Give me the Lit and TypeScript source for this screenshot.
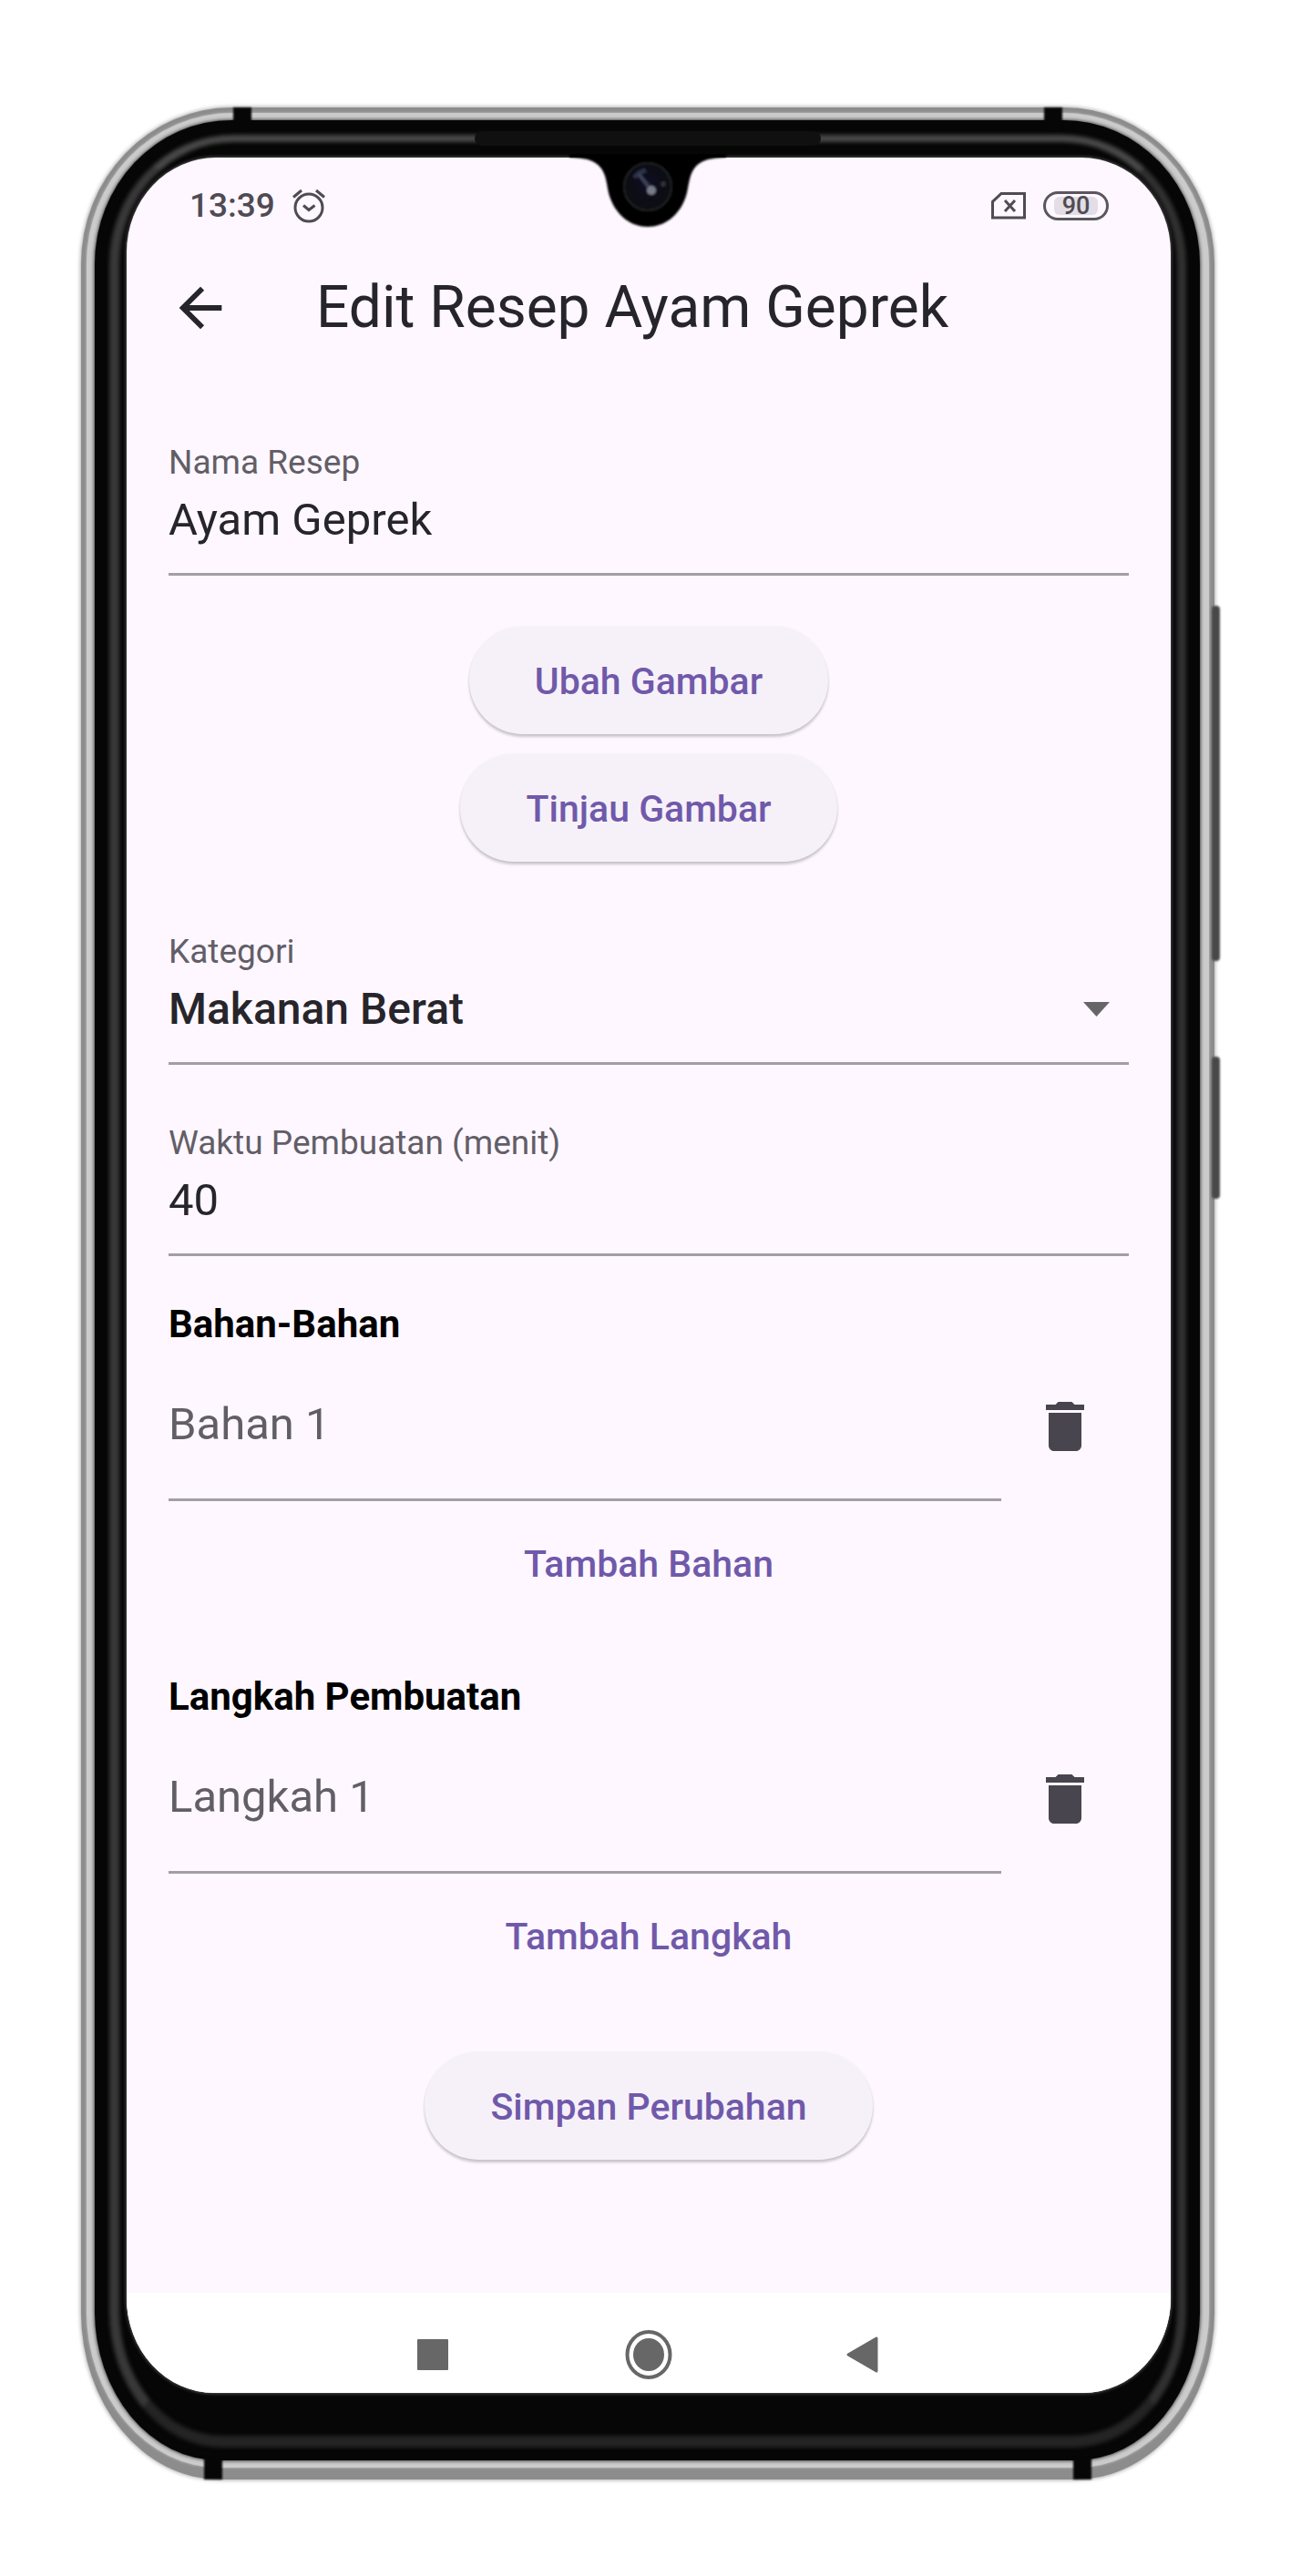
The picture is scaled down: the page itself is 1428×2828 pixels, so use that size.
import { LitElement, html, css, svg } from "lit";
import { customElement, property } from "lit/decorators.js";

const alarmIcon = svg`
  <svg class="alarm" viewBox="0 0 38 38" aria-hidden="true">
    <g fill="none" stroke="currentColor" stroke-width="3">
      <circle cx="19" cy="21" r="15" />
      <path d="M2 9.500L11 2M36 9.500L27 2" />
      <path d="M13 18.500L19 23.500L25.500 18.500" />
    </g>
  </svg>`;

const simIcon = svg`
  <svg class="sim" viewBox="0 0 40 32" aria-hidden="true">
    <g fill="none" stroke="currentColor" stroke-width="3">
      <path d="M12 2.500H37.500V29H2.500V11.500Z" />
      <path d="M16 10L27 22M27 10L16 22" />
    </g>
  </svg>`;

const backIcon = svg`
  <svg class="icon" viewBox="0 0 24 24" aria-hidden="true">
    <path fill="currentColor" d="M20 11H7.830l5.590-5.590L12 4l-8 8 8 8 1.410-1.410L7.830 13H20v-2z" />
  </svg>`;

const trashIcon = svg`
  <svg class="icon" viewBox="0 0 24 24" aria-hidden="true">
    <path fill="currentColor" d="M6 19c0 1.100.9 2 2 2h8c1.100 0 2-.9 2-2V7H6v12zM19 4h-3.500l-1-1h-5l-1 1H5v2h14V4z" />
  </svg>`;

const notch = svg`
  <svg class="notch" viewBox="0 0 180 84" aria-hidden="true">
    <defs>
      <radialGradient id="lens" cx="50%" cy="45%" r="55%">
        <stop offset="0" stop-color="#14162a" />
        <stop offset="0.6" stop-color="#060715" />
        <stop offset="1" stop-color="#121415" />
      </radialGradient>
      <filter id="soft"><feGaussianBlur stdDeviation="1.200" /></filter>
    </defs>
    <path filter="url(#soft)" fill="#060606"
      d="M4 -4V4C24 4 38 8 43 24C46 34 46 42 49 49C56 68 72 80 90 80C108 80 124 68 131 49C134 42 134 34 137 24C142 8 156 4 176 4V-4Z" />
    <g filter="url(#soft)">
      <circle cx="90" cy="36" r="26" fill="url(#lens)" stroke="#1a1d1e" stroke-width="3" />
      <path d="M75 26Q80 20 88 18" fill="none" stroke="#2c3048" stroke-width="5" />
      <path d="M80 22L94 40" stroke="#3c3f55" stroke-width="4" />
      <circle cx="94" cy="40" r="5" fill="#777b88" />
      <circle cx="107" cy="33" r="3" fill="#2e3234" />
    </g>
  </svg>`;

@customElement("text-field")
class TextField extends LitElement {
  @property() label = "";
  @property() value = "";
  @property({ type: Array }) options: string[] = [];

  static styles = css`
    :host { display: block; }
    .field {
      display: flex;
      flex-direction: column;
      gap: 4px;
      padding-bottom: 23px;
      border-bottom: 3px solid #a29ea6;
    }
    .label {
      font-size: 37px;
      line-height: 48px;
      color: #625e67;
    }
    .control {
      display: block;
      width: 100%;
      height: 70px;
      margin: 0;
      padding: 0;
      border: 0;
      outline: 0;
      border-radius: 0;
      background: transparent;
      appearance: none;
      font-family: inherit;
      font-size: 49px;
      line-height: 70px;
      color: #26252b;
    }
    .select { font-size: 48px; font-weight: 500; }
    .picker { display: grid; align-items: center; }
    .picker > * { grid-area: 1 / 1; }
    .caret {
      justify-self: end;
      width: 29px;
      height: 16px;
      margin-right: 21px;
      color: #666;
      pointer-events: none;
    }
  `;

  render() {
    return html`
      <div class="field">
        <label class="label" for="control">${this.label}</label>
        ${this.options.length
          ? html`<div class="picker">
              <select class="control select" id="control">
                ${this.options.map((o) => html`<option>${o}</option>`)}
              </select>
              <svg class="caret" viewBox="0 0 29 16" aria-hidden="true">
                <path fill="currentColor" d="M0 0H29L14.500 16Z" />
              </svg>
            </div>`
          : html`<input class="control" id="control" .value=${this.value} />`}
      </div>
    `;
  }
}

@customElement("item-list")
class ItemList extends LitElement {
  @property() heading = "";
  @property() item = "";
  @property() action = "";

  static styles = css`
    :host { display: flex; flex-direction: column; }
    .heading {
      margin: 0 0 5px;
      font-size: 42px;
      line-height: 48px;
      font-weight: 700;
      color: #000;
    }
    .row { display: flex; align-items: center; }
    .input {
      flex: 1;
      min-width: 0;
      box-sizing: content-box;
      height: 70px;
      margin: 0;
      padding: 46px 0;
      border: 0;
      border-bottom: 3px solid #a29ea6;
      border-radius: 0;
      outline: 0;
      background: transparent;
      font-family: inherit;
      font-size: 49px;
      line-height: 70px;
      color: #26252b;
    }
    .input::placeholder { color: #625e67; opacity: 1; }
    .remove {
      display: flex;
      justify-content: center;
      width: 140px;
      padding: 0;
      border: 0;
      background: none;
      color: #49454f;
    }
    .icon { width: 72px; height: 72px; }
    .add {
      align-self: center;
      height: 119px;
      margin-top: 9px;
      padding: 0 36px;
      border: 0;
      background: none;
      font-family: inherit;
      font-size: 41px;
      line-height: 48px;
      font-weight: 500;
      color: #7059aa;
    }
  `;

  render() {
    return html`
      <h2 class="heading">${this.heading}</h2>
      <div class="row">
        <input class="input" placeholder=${this.item} aria-label=${this.item} />
        <button class="remove" type="button">${trashIcon}</button>
      </div>
      <button class="add" type="button">${this.action}</button>
    `;
  }
}

@customElement("app-root")
class AppRoot extends LitElement {
  static styles = css`
    :host {
      display: block;
      box-sizing: border-box;
      min-height: 100vh;
      padding: 118px 95px 104px 89px;
      background: #fff;
      font-family: Roboto, "Liberation Sans", sans-serif;
    }

    /* Metal rim, highlight and glass, from the outside in */
    .phone {
      position: relative;
      padding: 6px 6px 13px;
      border-radius: 166px 166px 152px 152px / 172px 172px 184px 184px;
      background: #8c8c8c;
      box-shadow: 0 0 5px #8c8c8c;
    }
    .rim {
      padding: 8px 10px 8px 9px;
      border-radius: 160px 160px 146px 146px / 166px 166px 172px 172px;
      background: #cbcbcb;
      box-shadow: 0 0 3px #cbcbcb;
    }
    .glass {
      position: relative;
      padding: 41px 32px 74px 35px;
      border-radius: 150px 150px 136px 136px / 158px 158px 164px 164px;
      background: #060606;
      box-shadow: 0 0 4px #060606;
    }
    .edge {
      position: absolute;
      inset: 16px 15px 14px 16px;
      border: solid;
      border-width: 8px 10px 13px 11px;
      border-color: #484848 #303030 #242424 #383838;
      border-radius: 136px 136px 124px 124px / 142px 142px 150px 150px;
      filter: blur(2px);
    }
    .speaker {
      position: absolute;
      top: 12px;
      left: 50%;
      width: 380px;
      height: 16px;
      margin-left: -190px;
      border-radius: 8px;
      background: #101010;
    }
    .notch {
      position: absolute;
      top: 37px;
      left: 50%;
      width: 180px;
      height: 84px;
      margin-left: -90px;
    }
    .band {
      position: absolute;
      width: 20px;
      height: 24px;
      background: #060606;
      filter: blur(1px);
    }
    .band.tl { top: 0; left: 167px; }
    .band.tr { top: 0; right: 167px; }
    .band.bl { bottom: 0; left: 135px; }
    .band.br { bottom: 0; right: 135px; }
    .side {
      position: absolute;
      right: -6px;
      width: 9px;
      border-radius: 4px;
      background: #484848;
      filter: blur(1px);
    }
    .side.volume { top: 21%; height: 15%; }
    .side.power { top: 40%; height: 6%; }

    .screen {
      position: relative;
      overflow: hidden;
      border-radius: 98px 98px 96px 96px / 104px;
      background: #fef7ff;
      box-shadow: 0 0 4px #777;
    }
    .status {
      display: flex;
      align-items: center;
      gap: 18px;
      height: 60px;
      padding: 23px 68px 0 69px;
      color: #4f4b53;
    }
    .time {
      font-size: 37px;
      line-height: 42px;
      font-weight: 500;
    }
    .alarm { width: 38px; height: 38px; }
    .sim { width: 40px; height: 32px; margin-left: auto; }
    .battery {
      box-sizing: border-box;
      width: 72px;
      height: 32px;
      padding: 3px 9px;
      border: 3px solid #5a565e;
      border-radius: 16px;
    }
    .charge {
      display: block;
      border-radius: 6px;
      background: #e3dde5;
      font-size: 27px;
      line-height: 20px;
      font-weight: 500;
      text-align: center;
    }

    .bar {
      display: flex;
      align-items: center;
      gap: 92px;
      height: 164px;
      padding: 0 46px;
      color: #26252b;
    }
    .back {
      display: flex;
      padding: 0;
      border: 0;
      background: none;
      color: inherit;
    }
    .icon { width: 70px; height: 70px; }
    .title {
      margin: 0;
      font-size: 64px;
      line-height: 76px;
      font-weight: 400;
    }

    .form {
      display: flex;
      flex-direction: column;
      padding: 64px 46px 146px;
    }
    .pictures {
      display: flex;
      flex-direction: column;
      align-items: center;
      gap: 22px;
      margin: 56px 0 75px;
    }
    .pill {
      height: 118px;
      padding: 2px 72px 0;
      border: 0;
      border-radius: 60px;
      background: #f6f1f9;
      box-shadow: 0 3px 3px rgba(0, 0, 0, 0.2), 0 0 3px rgba(0, 0, 0, 0.06);
      font-family: inherit;
      font-size: 41px;
      line-height: 48px;
      font-weight: 500;
      color: #7059aa;
    }
    .time-field { margin-top: 62px; }
    .ingredients { margin-top: 51px; }
    .steps { margin-top: 63px; }
    .save { align-self: center; margin-top: 68px; }

    .nav {
      display: flex;
      justify-content: center;
      align-items: center;
      gap: 184px;
      height: 84px;
      padding-top: 26px;
      background: #fff;
      color: #676767;
    }
    .key {
      display: flex;
      padding: 0;
      border: 0;
      background: none;
      color: inherit;
    }
    .glyph { width: 52px; height: 56px; }
  `;

  render() {
    return html`
      <div class="phone">
        <span class="side volume"></span>
        <span class="side power"></span>
        <div class="rim">
          <div class="glass">
            <span class="edge"></span>
            <span class="speaker"></span>
            <main class="screen">
              <div class="status">
                <span class="time">13:39</span>
                ${alarmIcon} ${simIcon}
                <span class="battery"><span class="charge">90</span></span>
              </div>
              <header class="bar">
                <button class="back" type="button">${backIcon}</button>
                <h1 class="title">Edit Resep Ayam Geprek</h1>
              </header>
              <form class="form">
                <text-field label="Nama Resep" value="Ayam Geprek"></text-field>
                <div class="pictures">
                  <button class="pill" type="button">Ubah Gambar</button>
                  <button class="pill" type="button">Tinjau Gambar</button>
                </div>
                <text-field label="Kategori" .options=${["Makanan Berat"]}></text-field>
                <text-field class="time-field" label="Waktu Pembuatan (menit)" value="40"></text-field>
                <item-list class="ingredients" heading="Bahan-Bahan" item="Bahan 1" action="Tambah Bahan"></item-list>
                <item-list class="steps" heading="Langkah Pembuatan" item="Langkah 1" action="Tambah Langkah"></item-list>
                <button class="pill save" type="button">Simpan Perubahan</button>
              </form>
              <nav class="nav">
                <button class="key" type="button">
                  <svg class="glyph" viewBox="0 0 52 56" aria-hidden="true">
                    <rect x="8" y="11" width="34" height="34" rx="1" fill="currentColor" />
                  </svg>
                </button>
                <button class="key" type="button">
                  <svg class="glyph" viewBox="0 0 52 56" aria-hidden="true">
                    <ellipse cx="26" cy="28" rx="23.500" ry="25" fill="none" stroke="currentColor" stroke-width="4" />
                    <ellipse cx="26" cy="28" rx="17" ry="18" fill="currentColor" />
                  </svg>
                </button>
                <button class="key" type="button">
                  <svg class="glyph" viewBox="0 0 52 56" aria-hidden="true">
                    <path d="M9 28L40 10V46Z" fill="currentColor" stroke="currentColor" stroke-width="3" stroke-linejoin="round" />
                  </svg>
                </button>
              </nav>
            </main>
            ${notch}
          </div>
        </div>
        <span class="band tl"></span>
        <span class="band tr"></span>
        <span class="band bl"></span>
        <span class="band br"></span>
      </div>
    `;
  }
}
